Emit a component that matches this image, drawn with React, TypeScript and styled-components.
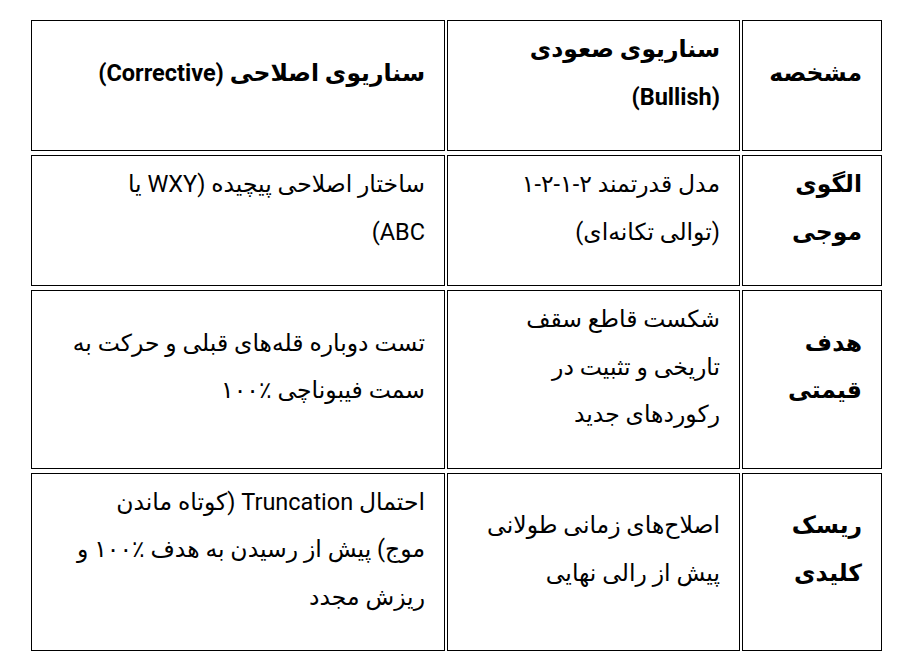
import React from 'react'
import styled, { createGlobalStyle } from 'styled-components'

const GlobalStyle = createGlobalStyle`
  body {
    margin: 0;
    background: #ffffff;
    color: #000000;
    font-family: Roboto, "DejaVu Sans", sans-serif;
  }
`

const rows = [
  {
    label: ['الگوی', 'موجی'],
    bullish: ['مدل قدرتمند ۲-۱-۲-۱', '(توالی تکانه‌ای)'],
    corrective: ['ساختار اصلاحی پیچیده (WXY یا', 'ABC)'],
  },
  {
    label: ['هدف', 'قیمتی'],
    bullish: ['شکست قاطع سقف', 'تاریخی و تثبیت در', 'رکوردهای جدید'],
    corrective: ['تست دوباره قله‌های قبلی و حرکت به', 'سمت فیبوناچی ٪۱۰۰'],
  },
  {
    label: ['ریسک', 'کلیدی'],
    bullish: ['اصلاح‌های زمانی طولانی', 'پیش از رالی نهایی'],
    corrective: ['احتمال Truncation (کوتاه ماندن', 'موج) پیش از رسیدن به هدف ٪۱۰۰ و', 'ریزش مجدد'],
  },
]

const Lines: React.FC<{ lines: string[] }> = ({ lines }) => (
  <>
    {lines.map((line, i) => (
      <React.Fragment key={i}>
        {i > 0 && <br />}
        {line}
      </React.Fragment>
    ))}
  </>
)

const App: React.FC = () => {
  return (
    <Page>
      <GlobalStyle />
      <Table dir="rtl">
        <colgroup>
          <col style={{ width: 140 }} />
          <col style={{ width: 293 }} />
          <col />
        </colgroup>
        <thead>
          <tr>
            <Cell as="th" $bold>مشخصه</Cell>
            <Cell as="th" $bold>
              <Lines lines={['سناریوی صعودی', '(Bullish)']} />
            </Cell>
            <Cell as="th" $bold>سناریوی اصلاحی (Corrective)</Cell>
          </tr>
        </thead>
        <tbody>
          {rows.map((row, index) => (
            <tr key={index}>
              <Cell $bold>
                <Lines lines={row.label} />
              </Cell>
              <Cell>
                <Lines lines={row.bullish} />
              </Cell>
              <Cell>
                <Lines lines={row.corrective} />
              </Cell>
            </tr>
          ))}
        </tbody>
      </Table>
    </Page>
  )
}

const Page = styled.div`
  padding-top: 16px;
`

const Table = styled.table`
  width: 855px;
  margin: 0 auto;
  border-collapse: separate;
  border-spacing: 2px 4px;
  table-layout: fixed;
`

const Cell = styled.td<{ $bold?: boolean }>`
  border: 1px solid #000;
  padding: 5px 19px 29px;
  text-align: right;
  vertical-align: middle;
  font-size: 23.5px;
  line-height: 47.5px;
  font-weight: ${p => (p.$bold ? 700 : 400)};
  color: #000;
  white-space: nowrap;
`

export default App
